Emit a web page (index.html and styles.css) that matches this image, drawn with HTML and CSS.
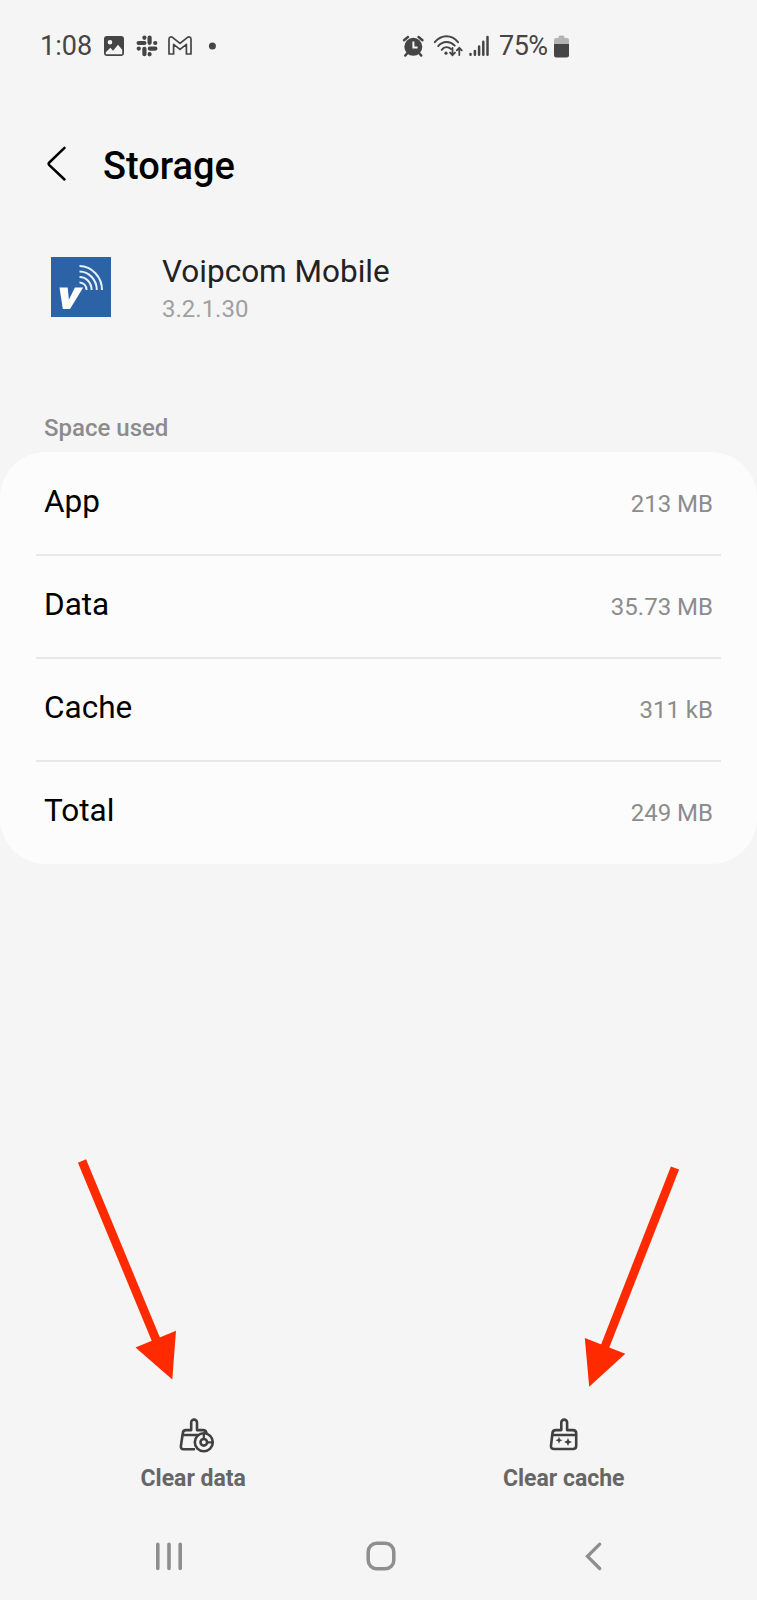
FILE: index.html
```
<!DOCTYPE html>
<html lang="en">
<head>
    <meta charset="UTF-8">
    <meta name="viewport" content="width=device-width, initial-scale=1.0">
    <title>Storage</title>
    <link rel="stylesheet" href="styles.css">
</head>
<body>
    <div class="screen">
        <!-- Status bar -->
        <div class="status-bar">
            <div class="status-left">
                <span class="clock">1:08</span>
                <svg width="24" height="24" viewBox="0 0 24 24">
                    <path fill="#454545" fill-rule="evenodd" d="M4.5 2h15A2.6 2.6 0 0 1 22 4.600v15a2.600 2.600 0 0 1-2.500 2.500h-15A2.600 2.600 0 0 1 2 19.600v-15A2.600 2.600 0 0 1 4.500 2zM8 6a2.300 2.300 0 1 0 0 4.600A2.300 2.300 0 0 0 8 6zM3.800 18.200V20.200h16.400v-4.400L16 10.700l-5 6-2.600-3z"/>
                </svg>
                <svg width="24" height="24" viewBox="0 0 24 24">
                    <g stroke="#454545" stroke-width="4.2" stroke-linecap="round">
                        <path d="M9.400 3.600v.2M9.400 9H3.600M14.600 3.600v5.200M20.200 9h.1M14.800 14.600h5.600M14.600 20.200v.1M9.400 14.800v5.400M3.700 14.600h.1"/>
                    </g>
                </svg>
                <svg width="24" height="24" viewBox="0 0 24 24">
                    <path fill="none" stroke="#454545" stroke-width="1.700" stroke-linejoin="round" d="M1 20V5.200C1 2.800 3.300 2.400 4.800 3.600L12 9.400l7.200-5.800C20.700 2.400 23 2.800 23 5.200V20h-4.600V10.400L12 15.400l-6.400-5V20z"/>
                </svg>
                <svg width="24" height="24" viewBox="0 0 24 24">
                    <circle cx="11.400" cy="12" r="3.500" fill="#454545"/>
                </svg>
            </div>
            <div class="status-right">
                <svg width="24" height="24" viewBox="0 0 24 24">
                    <circle cx="12.300" cy="12.800" r="9" fill="#454545"/>
                    <path fill="none" stroke="#454545" stroke-width="2.400" stroke-linecap="round" d="M3 6.200 7 3M21.500 6.200l-4-3.200M6.500 19l-2.300 2.600M18 19l2.300 2.600"/>
                    <path fill="none" stroke="#f5f5f5" stroke-width="2" d="M12.400 7.500v6h4.200"/>
                </svg>
                <svg class="wifi" width="30" height="24" viewBox="0 0 30 24">
                    <g fill="none" stroke="#454545" stroke-width="2" stroke-linecap="round">
                        <path d="M1.800 8.200C8.500.4 18.500.4 25 8.200M5.200 12.100c4.700-5.300 11.800-5.300 16.500-.5M8.700 15.800c2.700-3.100 6.400-3.300 9.300-.8"/>
                        <path stroke-width="1.800" d="M19.500 14v7M17 18.700l2.500 2.500 2.500-2.500M26.300 21v-7M23.800 16.300l2.500-2.500 2.500 2.500"/>
                    </g>
                    <circle cx="13" cy="19.200" r="1.600" fill="#454545"/>
                </svg>
                <svg width="22" height="24" viewBox="0 0 22 24">
                    <path stroke="#454545" stroke-width="2.500" stroke-linecap="round" d="M2.500 20v.8M6.900 17v3.800M11.100 12.500v8.300M15.300 7.800v13M19.500 3v17.800"/>
                </svg>
                <span class="battery-text">75%</span>
                <svg width="17" height="24" viewBox="0 0 17 24">
                    <path fill="#b4b4b4" d="M5.500 3.200Q5.500 1.600 7 1.600h3q1.500 0 1.500 1.600V4H14q2 0 2 2v5H1V6q0-2 2-2h2.500z"/>
                    <path fill="#454545" d="M1 10h15v11q0 2.500-2.500 2.500h-10Q1 23.500 1 21z"/>
                </svg>
            </div>
        </div>

        <div class="header">
            <svg class="back" width="22" height="38" viewBox="0 0 22 38">
                <path fill="none" stroke="#000" stroke-width="2.500" stroke-linecap="round" stroke-linejoin="round" d="M18.500 2.800 3.300 17.500q-1.300 1.300 0 2.600L18.500 34.500"/>
            </svg>
            <h1 class="title">Storage</h1>
        </div>

        <!-- App info -->
        <div class="app-info">
            <svg width="60" height="60" viewBox="0 0 60 60">
                <path fill="#2c63a6" d="M0 0h60v60H0z"/>
                <path fill="#fff" d="M8.500 30.500h8.200l1.200 12.200 6-12.200h8.300L19 52h-7.200z"/>
                <g fill="none" stroke="#e4f1fb" stroke-width="2">
                    <path d="M28.500 9A23 24 0 0 1 51 33M28.500 14.500A17.500 18.500 0 0 1 45.800 33M28.500 20A12 13 0 0 1 40.600 33M28.500 25.400A7 7.500 0 0 1 35.600 33"/>
                </g>
            </svg>
            <div class="app-text">
                <div class="app-name">Voipcom Mobile</div>
                <div class="app-version">3.2.1.30</div>
            </div>
        </div>

        <div class="section-label">Space used</div>
        <div class="card">
            <div class="row"><span class="label">App</span><span class="value">213 MB</span></div>
            <div class="row"><span class="label">Data</span><span class="value">35.73 MB</span></div>
            <div class="row"><span class="label">Cache</span><span class="value">311 kB</span></div>
            <div class="row"><span class="label">Total</span><span class="value">249 MB</span></div>
        </div>

        <!-- Bottom actions -->
        <div class="actions">
            <div class="action">
                <svg width="44" height="40" viewBox="-2 0 44 40">
                    <g fill="none" stroke="#404040" stroke-width="2.600" stroke-linejoin="round">
                        <path d="M22 34.200H10.500q-3 0-2.600-3L9.800 18q.3-2.900 3.200-2.900h5.200V7.500a2.900 2.900 0 0 1 5.800 0v7.600h6q3 0 3.400 3M10 20h15"/>
                        <circle cx="30.800" cy="27.300" r="9"/>
                        <circle cx="30.800" cy="27.300" r="3.300"/>
                        <path stroke-width="2.200" d="M30.800 18v6M34 27.300h6"/>
                    </g>
                </svg>
                <span>Clear data</span>
            </div>
            <div class="action">
                <svg width="40" height="40" viewBox="0 0 40 40">
                    <path fill="none" stroke="#404040" stroke-width="2.600" stroke-linejoin="round" d="M17.300 15.100V7.500a2.900 2.900 0 0 1 5.800 0v7.600h5.800q3.300 0 3.300 3.300v12.300q0 3.300-3.300 3.300H10q-3.300 0-3-3.300L8.500 18q.3-2.900 3.200-2.900zM8.500 20h23.700"/>
                    <path fill="#404040" d="m15 21.700 1 2.500 2.500 1-2.500 1-1 2.500-1-2.500-2.500-1 2.500-1zM24 23l1.200 2.800L28 27l-2.800 1.200L24 31l-1.200-2.800L20 27l2.800-1.200z"/>
                </svg>
                <span>Clear cache</span>
            </div>
        </div>

        <!-- Navigation bar -->
        <div class="nav-bar">
            <svg width="32" height="32" viewBox="0 0 32 32">
                <path stroke="#8e8e8e" stroke-width="3.600" stroke-linecap="round" d="M4.800 4.200v24.200M16 4.200v24.200M27.200 4.200v24.200"/>
            </svg>
            <svg width="32" height="32" viewBox="0 0 32 32">
                <rect x="3.200" y="3.200" width="25.600" height="25.600" rx="8.500" fill="none" stroke="#8e8e8e" stroke-width="3.500"/>
            </svg>
            <svg width="32" height="32" viewBox="0 0 32 32">
                <path fill="none" stroke="#8e8e8e" stroke-width="3.300" stroke-linecap="round" d="M22.700 4.200 10.500 16.300l12.200 12.200"/>
            </svg>
        </div>

        <!-- Arrows pointing at the actions -->
        <svg class="arrows" width="757" height="240" viewBox="0 1150 757 240">
            <g stroke="#ff2a00" stroke-width="8.800">
                <path d="M82 1161 157 1342M675 1168 604 1349"/>
            </g>
            <path fill="#ff2a00" d="M135.500 1347.500 176 1330.800 172.300 1379.500zM584.800 1338 625.300 1353.700 589.200 1386.700z"/>
        </svg>
    </div>
</body>
</html>
```
FILE: styles.css
```
body {
    margin: 0;
    background-color: #f5f5f5;
    font-family: Roboto, sans-serif;
    color: #000;
}

.screen {
    position: relative;
    display: flex;
    flex-direction: column;
    height: 1600px;
    overflow: hidden;
}

svg {
    display: block;
    flex-shrink: 0;
}

/* Status bar */
.status-bar {
    display: flex;
    align-items: center;
    height: 91px;
    padding-left: 40px;
    font-size: 27px;
    color: #454545;
}

.status-left {
    display: flex;
    align-items: center;
    gap: 9px;
    width: 361px;
}

.clock {
    width: 53px;
}

.status-right {
    display: flex;
    align-items: center;
}

.wifi {
    margin: 0 5px 0 8px;
}

.battery-text {
    width: 54px;
    margin-left: 9px;
    letter-spacing: -0.5px;
}

/* Header */
.header {
    display: flex;
    align-items: center;
    height: 150px;
    padding-left: 46px;
}

.back {
    margin-bottom: 4px;
}

.title {
    margin: 0 0 0 35px;
    font-size: 38px;
    font-weight: 500;
}

/* App info */
.app-info {
    display: flex;
    gap: 51px;
    height: 147px;
    padding: 16px 0 0 51px;
    box-sizing: border-box;
}

.app-text {
    margin-top: -3px;
}

.app-name {
    font-size: 31.5px;
    line-height: 36px;
    color: #222;
}

.app-version {
    font-size: 24px;
    line-height: 38px;
    color: #a0a0a0;
}

/* Space used */
.section-label {
    margin-top: 16px;
    padding-left: 44px;
    font-size: 24px;
    font-weight: 500;
    line-height: 48px;
    color: #8c8c8c;
}

.card {
    background-color: #fcfcfc;
    border-radius: 46px;
    padding: 0 36px;
}

.row {
    display: flex;
    justify-content: space-between;
    align-items: center;
    height: 103px;
    padding: 0 8px;
    box-sizing: border-box;
}

.row + .row {
    box-shadow: 0 -1px #e8e8e8, inset 0 1px #e8e8e8;
}

.label {
    font-size: 31.5px;
    padding-bottom: 5px;
}

.value {
    font-size: 24px;
    color: #8c8c8c;
}

/* Bottom actions */
.actions {
    display: grid;
    grid-template-columns: 1fr 1fr;
    margin-top: auto;
    padding: 0 8px;
}

.action {
    display: flex;
    flex-direction: column;
    align-items: center;
    height: 97px;
    font-size: 23px;
    font-weight: 700;
    line-height: 48px;
    color: #666;
}

.nav-bar {
    display: flex;
    justify-content: space-around;
    align-items: center;
    height: 88px;
    padding: 0 58px 0 63px;
}

.arrows {
    position: absolute;
    left: 0;
    top: 1150px;
}
```
